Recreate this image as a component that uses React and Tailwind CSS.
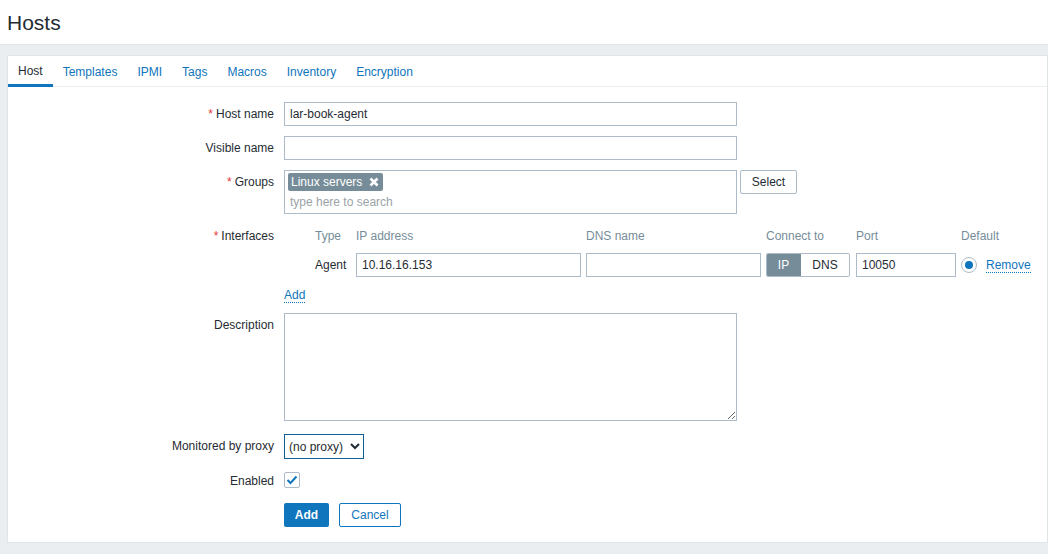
import React from "react";

const inputCls = "h-6 border border-[#acbbc7] bg-white px-[5px] text-xs text-[#1f2c33] outline-none";

function Row({ label, required, className = "", children }) {
  return (
    <div className={"flex items-start " + className}>
      <div className="w-[266px] shrink-0 text-right text-xs leading-6 text-[#1f2c33]">
        {required && <span className="mr-[3px] text-[#e33734]">*</span>}
        {label}
      </div>
      <div className="ml-[10px] min-w-0 flex-1">{children}</div>
    </div>
  );
}

const tabs = ["Templates", "IPMI", "Tags", "Macros", "Inventory", "Encryption"];

export default function App() {
  return (
    <div className="h-[554px] w-[1048px] overflow-hidden bg-[#ebeef0] font-['Liberation_Sans',Arial,sans-serif] text-xs text-[#1f2c33]">
      <header className="flex h-[45px] items-center border-b border-[#dfe4e7] bg-white pl-[7px]">
        <h1 className="text-[21px] leading-none font-normal text-[#1f2c33]">Hosts</h1>
      </header>
      <main className="mt-[10px] ml-[7px] h-[488px] border border-[#dfe4e7] bg-white">
        <nav className="flex h-[31px] border-b border-[#ebeef0] text-xs">
          <div className="flex h-[31px] items-center border-b-[3px] border-[#0f75bc] px-[10px] pt-[2px] text-[#1f2c33]">Host</div>
          {tabs.map((t) => (
            <a key={t} className="flex h-[30px] items-center px-[10px] pt-[2px] text-[#0f75bc]">{t}</a>
          ))}
        </nav>
        <form className="flex flex-col pt-[15px]">
          <Row label="Host name" required>
            <input className={inputCls + " block w-[453px]"} defaultValue="lar-book-agent" />
          </Row>
          <Row label="Visible name" className="mt-[10px]">
            <input className={inputCls + " block w-[453px]"} />
          </Row>
          <Row label="Groups" required className="mt-[10px]">
            <div className="flex items-start gap-[3px]">
              <div className="h-[44px] w-[453px] border border-[#acbbc7] bg-white px-[3px] pt-[2px]">
                <div className="flex h-[18px] w-[95px] items-center justify-between rounded-[2px] bg-[#768d99] px-[3px] text-xs text-white">
                  <span>Linux servers</span>
                  <svg width="10" height="10" viewBox="0 0 10 10" className="mr-[1px]">
                    <path d="M1.5 1.5 L8.5 8.5 M8.5 1.5 L1.5 8.5" stroke="#fff" strokeWidth="2.6" />
                  </svg>
                </div>
                <div className="mt-[2px] pl-[2px] text-xs leading-[18px] text-[#9aa3a8]">type here to search</div>
              </div>
              <button type="button" className="h-6 w-[57px] rounded-[2px] border border-[#acbbc7] bg-white text-xs text-[#1f2c33]">Select</button>
            </div>
          </Row>
          <Row label="Interfaces" required className="mt-[10px]">
            <div className="flex flex-col">
              <div className="flex h-6 items-center text-xs text-[#768d99]">
                <span className="ml-[31px] w-[41px]">Type</span>
                <span className="w-[230px]">IP address</span>
                <span className="w-[180px]">DNS name</span>
                <span className="w-[90px]">Connect to</span>
                <span className="w-[105px]">Port</span>
                <span>Default</span>
              </div>
              <div className="mt-[5px] flex h-6 items-center">
                <span className="ml-[31px] w-[41px] text-xs">Agent</span>
                <input className={inputCls + " w-[225px]"} defaultValue="10.16.16.153" />
                <input className={inputCls + " ml-[5px] w-[175px]"} />
                <div className="ml-[5px] flex h-6 w-[84px] overflow-hidden rounded-[2px] border border-[#acbbc7] text-xs">
                  <span className="-my-px -ml-px flex w-[35px] items-center justify-center bg-[#768d99] text-white">IP</span>
                  <span className="flex flex-1 items-center justify-center text-[#1f2c33]">DNS</span>
                </div>
                <input className={inputCls + " ml-[6px] w-[100px]"} defaultValue="10050" />
                <span className="ml-[5px] flex h-4 w-4 items-center justify-center rounded-full border border-[#acbbc7] bg-white">
                  <span className="h-2 w-2 rounded-full bg-[#0f75bc]" />
                </span>
                <a className="ml-[9px] border-b border-dotted border-[#0f75bc] text-xs leading-[14px] text-[#0f75bc]">Remove</a>
              </div>
              <div className="mt-[10px] h-[16px]">
                <a className="inline-block border-b border-dotted border-[#0f75bc] text-xs leading-[14px] text-[#0f75bc]">Add</a>
              </div>
            </div>
          </Row>
          <Row label="Description" className="mt-[10px]">
            <textarea className="block h-[108px] w-[453px] border border-[#acbbc7] bg-white px-[5px] py-1 text-xs outline-none" />
          </Row>
          <Row label="Monitored by proxy" className="mt-[13px]">
            <select className="block h-[25px] w-[80px] rounded-none border border-[#0f5f96] bg-white text-xs text-[#1f2c33] outline-none">
              <option>(no proxy)</option>
            </select>
          </Row>
          <Row label="Enabled" className="mt-[10px]">
            <span className="mt-[3px] flex h-4 w-4 items-center justify-center rounded-[2px] border border-[#acbbc7] bg-white">
              <svg width="12" height="10" viewBox="0 0 12 10">
                <path d="M1.5 5 L4.5 8 L10.5 1.5" fill="none" stroke="#0f75bc" strokeWidth="2" />
              </svg>
            </span>
          </Row>
          <div className="mt-[10px] ml-[276px] flex gap-[10px]">
            <button type="button" className="h-6 w-[45px] rounded-[2px] bg-[#0f75bc] text-xs font-bold text-white">Add</button>
            <button type="button" className="h-6 w-[62px] rounded-[2px] border border-[#0f75bc] bg-white text-xs text-[#0f75bc]">Cancel</button>
          </div>
        </form>
      </main>
    </div>
  );
}
